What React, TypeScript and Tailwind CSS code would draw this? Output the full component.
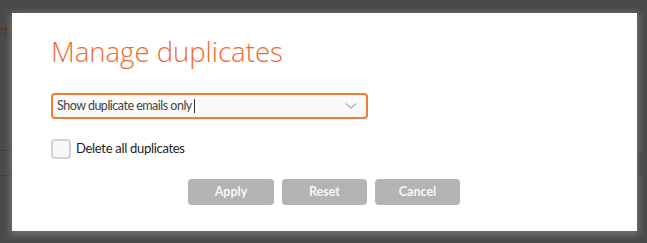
import React from "react";

export default function App() {
  return (
    <div
      className="relative w-[647px] h-[243px] overflow-hidden bg-[#4a4a4a]"
      style={{ fontFamily: "Lato, 'Noto Sans', sans-serif" }}
    >
      {/* background page content under the overlay */}
      <div className="absolute left-[-4px] top-[18px] text-[20px] leading-[24px] text-[#5e3322]">rt</div>
      <div className="absolute left-0 top-[150px] w-[12px] h-px bg-[#3c3c3c]" />
      <div className="absolute left-0 top-[175px] w-[12px] h-px bg-[#3c3c3c]" />
      <div className="absolute right-[5px] top-[151px] w-[4px] h-[26px] rounded-sm bg-[#3e3e3e]" />

      <div className="pt-[13px] pl-[12px]">
        <div className="relative w-[625px] h-[218px] bg-white shadow-[0_2px_7px_2px_rgba(150,150,150,0.55)] pl-[39px] pt-[20px]">
          <h1
            className="text-[27.5px] font-light leading-[38px] text-[#f26a2b]"
            style={{ fontFamily: "'Open Sans', sans-serif" }}
          >
            Manage duplicates
          </h1>
          <div className="mt-[22px] w-[317px] h-[26px] rounded-[4px] border-2 border-[#f47a3a] bg-[#fafafa] flex items-center justify-between pl-[4px] pr-[9px]">
            <span className="text-[12.5px] tracking-[-0.5px] text-[#444] flex items-center">
              Show duplicate emails only
              <span className="inline-block w-px h-[14px] bg-[#333] ml-[2px]" />
            </span>
            <svg width="12" height="8" viewBox="0 0 12 8" fill="none">
              <path d="M1 1.5 L6 6 L11 1.5" stroke="#b5b5b5" strokeWidth="1.5" />
            </svg>
          </div>
          <label className="mt-[20px] flex items-center gap-[5px]">
            <span className="w-[20px] h-[20px] rounded-[4px] border-2 border-[#d2d2d2] bg-[#f7f7f7]" />
            <span className="text-[13px] tracking-[-0.3px] text-[#222]">Delete all duplicates</span>
          </label>
          <div className="mt-[20px] ml-[137px] flex gap-[8px]">
            <button className="w-[86px] h-[26px] rounded-[4px] bg-[#b3b3b3] text-[#f7f7f7] text-[12.5px] font-bold">
              Apply
            </button>
            <button className="w-[85px] h-[26px] rounded-[4px] bg-[#b3b3b3] text-[#f7f7f7] text-[12.5px] font-bold">
              Reset
            </button>
            <button className="w-[85px] h-[26px] rounded-[4px] bg-[#b3b3b3] text-[#f7f7f7] text-[12.5px] font-bold">
              Cancel
            </button>
          </div>
        </div>
      </div>
    </div>
  );
}
